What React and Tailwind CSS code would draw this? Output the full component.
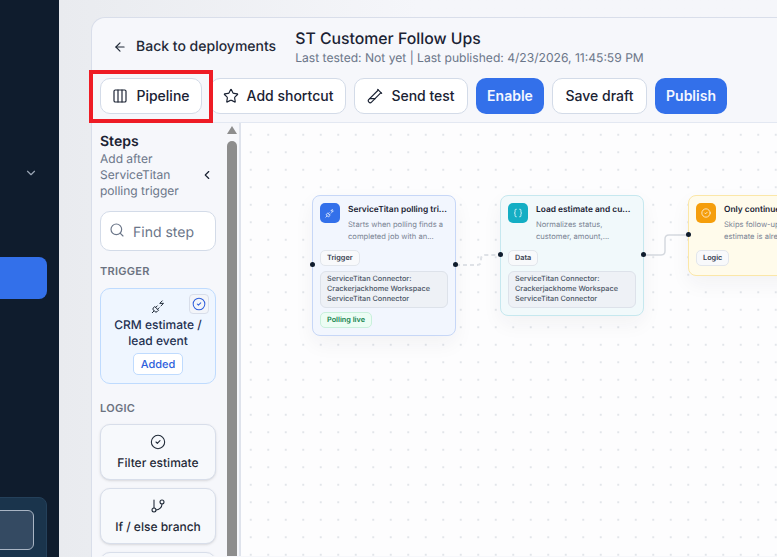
import { ArrowLeft, Braces, ChevronDown, ChevronLeft, CircleCheck, Columns3, GitBranch, PlugZap, Search, Star, TestTubeDiagonal } from 'lucide-react';

function ToolButton({ icon: Icon, label, width }) {
  return (
    <button className={`flex h-9 items-center justify-center gap-2 rounded-[10px] border border-[#d3dbe8] bg-white text-sm font-medium text-[#1a2233] ${width}`}>
      {Icon && <Icon size={16} strokeWidth={1.75} />}
      {label}
    </button>
  );
}

function BlueButton({ label, width }) {
  return (
    <button className={`h-9 rounded-[10px] bg-[#3370ea] text-sm font-semibold text-[#f4f7ff] ${width}`}>{label}</button>
  );
}

function StepCard({ icon: Icon, label }) {
  return (
    <div className="flex h-14 w-[116px] flex-col items-center justify-center gap-[5px] rounded-[10px] border border-[#d8deea] bg-[#f7f9fc] text-xs font-medium text-[#1f2937] shadow-sm">
      {Icon && <Icon size={16} strokeWidth={1.6} />}
      <span>{label}</span>
    </div>
  );
}

function Connector() {
  return (
    <div className="mt-[5px] rounded-md border border-[#dde2ea] bg-[#eef1f6] px-[6px] pt-[2px] pb-[3px] text-[7.3px] leading-[10px] font-medium whitespace-nowrap text-[#4b5565]">
      ServiceTitan Connector:<br />Crackerjackhome Workspace<br />ServiceTitan Connector
    </div>
  );
}

function Node({ className, iconBg, icon: Icon, title, desc, tag, children }) {
  return (
    <div className={`absolute top-[72px] w-[144px] rounded-lg border p-[7px] shadow-[0_8px_20px_rgba(30,41,59,0.05)] ${className}`}>
      <div className="flex gap-2">
        <div className={`flex h-5 w-5 shrink-0 items-center justify-center rounded-[5px] text-white ${iconBg}`}>
          <Icon size={10} strokeWidth={1.75} />
        </div>
        <div className="min-w-0">
          <div className="text-[8.4px] leading-[14px] font-semibold whitespace-nowrap text-[#1a2233]">{title}</div>
          <div className="mt-[2px] h-6 text-[7.6px] leading-3 whitespace-pre text-[#7a8494]">{desc}</div>
        </div>
      </div>
      <span className="mt-[7px] block w-fit rounded-[5px] border border-[#e2e6ec] bg-[#f8f9fb] px-[6px] py-[2px] text-[7.3px] leading-[10px] font-semibold text-[#374151]">{tag}</span>
      {children}
    </div>
  );
}

export default function App() {
  return (
    <div className="flex h-[557px] w-[777px] overflow-hidden bg-[#f5f6fa] font-['Inter',sans-serif] [text-rendering:geometricPrecision]">
      <aside className="relative h-full w-[59px] shrink-0 overflow-hidden bg-[#0f1c2d]">
        <ChevronDown size={14} className="mt-[166px] ml-6 text-[#9aa5b4]" />
        <div className="mt-[77px] ml-[-12px] h-[42px] w-[59px] rounded-lg bg-[#3370ea]"></div>
        <div className="mt-[198px] ml-[-12px] h-[80px] w-[59px] rounded-lg border border-[#24405a] bg-[#1a344c] pt-3">
          <div className="ml-[-1px] h-10 w-[46px] rounded-md border border-[#a9b5c4] bg-[#344a62]"></div>
        </div>
      </aside>

      <main className="flex-1 bg-gradient-to-r from-[#e9ebef] via-[#f5f6fa] to-[#f5f6fa] to-[5%] pt-[17px] pl-8">
        <div className="relative h-[540px] w-[686px] rounded-tl-[14px] border-t border-l border-[#d9deea] bg-[#f6f7fb]">
          <div className="flex h-[60px] items-start pt-[9px] pl-[21px]">
            <div className="mt-[10px] flex items-center gap-[9px] text-sm font-medium text-[#1f2937]">
              <ArrowLeft size={14} strokeWidth={2} />
              Back to deployments
            </div>
            <div className="ml-[19px]">
              <div className="text-[15.8px] leading-[23px] font-medium text-[#1a2233]">ST Customer Follow Ups</div>
              <div className="text-[12.1px] leading-4 text-[#6b7689]">Last tested: Not yet | Last published: 4/23/2026, 11:45:59 PM</div>
            </div>
          </div>
          <div className="flex gap-2 pl-2">
            <ToolButton icon={Columns3} label="Pipeline" width="w-[102px]" />
            <ToolButton icon={Star} label="Add shortcut" width="w-[136px]" />
            <ToolButton icon={TestTubeDiagonal} label="Send test" width="w-[114px]" />
            <BlueButton label="Enable" width="w-[68px]" />
            <ToolButton label="Save draft" width="w-[95px]" />
            <BlueButton label="Publish" width="w-[72px]" />
          </div>

          <div className="absolute top-[52px] left-[-3px] h-[53px] w-[124px] border-4 border-[#ee1c25]"></div>

          <div className="mt-2 flex h-[434px] border-t border-[#e3e8f2]">
            <div className="relative w-[147px] shrink-0 overflow-hidden pt-[11px] pl-2">
              <div className="text-sm leading-4 font-semibold text-[#1a2233]">Steps</div>
              <div className="relative mt-[1px] w-[100px] text-xs leading-4 text-[#6b7689]">
                Add after ServiceTitan polling trigger
                <ChevronLeft size={14} strokeWidth={2} className="absolute top-[17px] left-[100px] text-[#1a2233]" />
              </div>
              <div className="mt-3 flex h-10 w-[116px] items-center gap-2 rounded-[10px] border border-[#d3dbe8] bg-white pl-2 text-sm text-[#6b7689]">
                <Search size={16} strokeWidth={1.75} className="mb-[3px]" />
                <span className="mt-[3px]">Find step</span>
              </div>
              <div className="mt-3 text-[11px] leading-4 font-semibold tracking-wide text-[#6b7280]">TRIGGER</div>
              <div className="relative mt-[9px] flex h-24 w-[116px] flex-col items-center rounded-[10px] border border-[#bfdbfe] bg-[#eff6ff] pt-[10px]">
                <PlugZap size={15} strokeWidth={1.6} className="text-[#1f2937]" />
                <div className="mt-[3px] text-center text-xs leading-4 font-medium text-[#1e3050]">CRM estimate /<br />lead event</div>
                <div className="mt-1 rounded-[5px] border border-[#bfdbfe] bg-white px-[7px] py-[2px] text-[11px] leading-[16px] font-medium text-[#2f5fdc]">Added</div>
                <div className="absolute top-[5px] right-[6px] flex h-5 w-5 items-center justify-center rounded-[4px] border border-[#d8deea] bg-[#f3f5f9]">
                  <CircleCheck size={14} strokeWidth={1.75} className="text-[#2f5fdc]" />
                </div>
              </div>
              <div className="mt-4 text-[11px] leading-4 font-semibold tracking-wide text-[#6b7280]">LOGIC</div>
              <div className="mt-2 flex flex-col gap-2">
                <StepCard icon={CircleCheck} label="Filter estimate" />
                <StepCard icon={GitBranch} label="If / else branch" />
                <StepCard />
              </div>
              <div className="absolute top-[3px] left-[135px] flex flex-col items-center">
                <div className="h-0 w-0 border-x-[5px] border-b-[8px] border-x-transparent border-b-[#8d8d8d]"></div>
                <div className="mt-[7px] h-[420px] w-[10px] rounded-t-full bg-[#8d8d8d]"></div>
              </div>
            </div>

            <div className="relative flex-1 overflow-hidden border-l-2 border-[#dfe3ec] bg-[#fdfdfe] bg-[radial-gradient(#e2e5ea_0.8px,transparent_1px)] bg-[size:17.5px_17.5px] bg-[position:1px_3px]">
              <svg className="absolute top-0 left-0" width="540" height="200" fill="none">
                <path d="M215 142 H236 Q240 142 240 138 V136 Q240 132 244 132 H260" stroke="#dfe2e7" strokeWidth="2" strokeDasharray="4 3" />
                <path d="M403 132 H420 Q424 132 424 128 V116 Q424 112 428 112 H448" stroke="#d5d9df" strokeWidth="1.5" />
              </svg>

              <Node className="left-[71px] h-[141px] border-[#c7d7f7] bg-[#f2f6fe]" iconBg="bg-[#3370ea]" icon={PlugZap} title="ServiceTitan polling tri..." desc={'Starts when polling finds a\ncompleted job with an...'} tag="Trigger">
                <Connector />
                <span className="mt-1 block w-fit rounded-[5px] border border-[#c9f0dc] bg-[#ecfdf4] px-[6px] py-[2px] text-[7.3px] leading-[10px] font-semibold text-[#16834f]">Polling live</span>
              </Node>
              <Node className="left-[259px] h-[121px] border-[#c6e8ef] bg-[#f1f9fb]" iconBg="bg-[#14aec4]" icon={Braces} title="Load estimate and cu..." desc={'Normalizes status,\ncustomer, amount,...'} tag="Data">
                <Connector />
              </Node>
              <Node className="left-[447px] h-[81px] border-[#fbe7a8] bg-[#fffbeb]" iconBg="bg-[#f59e0b]" icon={CircleCheck} title="Only continue when open" desc={'Skips follow-ups when the\nestimate is already sold'} tag="Logic" />

              <div className="absolute top-[139px] left-[69px] h-[5px] w-[5px] rounded-full bg-[#0f1c2d]"></div>
              <div className="absolute top-[139px] left-[212px] h-[5px] w-[5px] rounded-full bg-[#0f1c2d]"></div>
              <div className="absolute top-[129px] left-[257px] h-[5px] w-[5px] rounded-full bg-[#0f1c2d]"></div>
              <div className="absolute top-[129px] left-[400px] h-[5px] w-[5px] rounded-full bg-[#0f1c2d]"></div>
              <div className="absolute top-[109px] left-[445px] h-[5px] w-[5px] rounded-full bg-[#0f1c2d]"></div>
            </div>
          </div>
        </div>
      </main>
    </div>
  );
}
